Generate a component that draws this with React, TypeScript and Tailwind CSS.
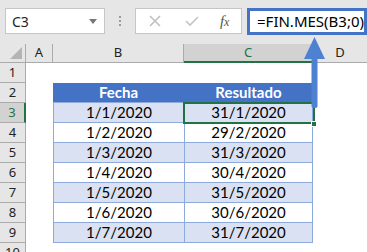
import React from "react";

const rows: [string, string][] = [
  ["1/1/2020", "31/1/2020"],
  ["1/2/2020", "29/2/2020"],
  ["1/3/2020", "31/3/2020"],
  ["1/4/2020", "30/4/2020"],
  ["1/5/2020", "31/5/2020"],
  ["1/6/2020", "30/6/2020"],
  ["1/7/2020", "31/7/2020"],
];

const cellFont = { fontFamily: "Lato, 'Noto Sans', sans-serif" };
const uiFont = { fontFamily: "'Noto Sans', 'Open Sans', sans-serif" };

function RowHead({ n, active }: { n: number; active?: boolean }) {
  return (
    <div
      className={`flex items-center justify-center border-b border-r text-[13px] ${
        active
          ? "bg-[#d2d2d2] text-[#217346] border-b-[#ababab] border-r-2 border-r-[#217346]"
          : "bg-[#e6e6e6] text-[#222] border-[#ababab]"
      }`}
      style={uiFont}
    >
      {n}
    </div>
  );
}

function ColHead({ label, active }: { label: string; active?: boolean }) {
  return (
    <div
      className={`flex items-center justify-center border-r text-[13px] ${
        active
          ? "bg-[#d2d2d2] text-[#217346] border-r-[#ababab] border-b-2 border-b-[#217346]"
          : "bg-[#e6e6e6] text-[#222] border-[#ababab] border-b"
      }`}
      style={uiFont}
    >
      {label}
    </div>
  );
}

export default function App() {
  return (
    <div className="relative w-[367px] h-[252px] overflow-hidden bg-white">
      {/* toolbar */}
      <div className="h-[44px] bg-[#e6e6e6] flex items-start pt-[8px] pl-[5px]">
        <div
          className="w-[102px] h-[26px] bg-white border border-[#c6c6c6] flex items-center justify-between pl-[6px] pr-[7px] text-[14px] text-[#222]"
          style={uiFont}
        >
          <span>C3</span>
          <svg width="8" height="5" viewBox="0 0 8 5">
            <path d="M0 0h8L4 5z" fill="#777" />
          </svg>
        </div>
        <div className="w-[31px] h-[26px] flex flex-col items-center justify-center gap-[2px]">
          <span className="w-[2px] h-[2px] bg-[#9a9a9a]" />
          <span className="w-[2px] h-[2px] bg-[#9a9a9a]" />
          <span className="w-[2px] h-[2px] bg-[#9a9a9a]" />
        </div>
        <div className="w-[110px] h-[26px] bg-white border border-[#c6c6c6] flex items-center">
          <svg width="14" height="14" viewBox="0 0 14 14" className="ml-[12px]">
            <path d="M2 2l10 10M12 2L2 12" stroke="#bdbdbd" strokeWidth="1.5" />
          </svg>
          <svg width="16" height="14" viewBox="0 0 16 14" className="ml-[22px]">
            <path d="M2 7l4 4 8-8" stroke="#c4c4c4" strokeWidth="1.6" fill="none" />
          </svg>
          <span
            className="ml-[20px] italic text-[15px] text-[#555]"
            style={{ fontFamily: "'Liberation Serif', serif" }}
          >
            f<span className="text-[12px]">x</span>
          </span>
        </div>
        <div
          className="ml-[5px] flex-1 h-[27px] border-[3px] border-[#4472c4] bg-white flex items-center pl-[7px] text-[15px] text-black"
          style={uiFont}
        >
          =FIN.MES(B3;0)
        </div>
      </div>

      {/* sheet grid */}
      <div className="grid grid-cols-[26px_27px_131px_129px_1fr] grid-rows-[19px_repeat(10,20px)]">
        <div className="bg-[#e6e6e6] border-r border-b border-[#ababab] relative">
          <svg width="12" height="12" viewBox="0 0 12 12" className="absolute right-[3px] bottom-[3px]">
            <path d="M12 0v12H0z" fill="#b4b4b4" />
          </svg>
        </div>
        <ColHead label="A" />
        <ColHead label="B" />
        <ColHead label="C" active />
        <div className="bg-[#e6e6e6] border-b border-[#ababab] flex items-center justify-center text-[13px] text-[#222]" style={uiFont}>
          D
        </div>

        {/* row 1 */}
        <RowHead n={1} />
        <div />
        <div />
        <div />
        <div />

        {/* row 2: table header */}
        <RowHead n={2} />
        <div />
        <div
          className="bg-[#4472c4] text-white font-bold text-[15px] flex items-center justify-center border-b border-[#8ea9db]"
          style={cellFont}
        >
          Fecha
        </div>
        <div
          className="bg-[#4472c4] text-white font-bold text-[15px] flex items-center justify-center border-b border-[#8ea9db]"
          style={cellFont}
        >
          Resultado
        </div>
        <div />

        {rows.map(([a, b], i) => {
          const band = i % 2 === 0 ? "bg-[#d9e1f2]" : "bg-white";
          return (
            <React.Fragment key={a}>
              <RowHead n={i + 3} active={i === 0} />
              <div />
              <div
                className={`${band} border-l border-b border-[#8ea9db] flex items-center justify-center text-[15px] text-black`}
                style={cellFont}
              >
                {a}
              </div>
              <div
                className={`${band} border-l border-r border-b border-[#8ea9db] flex items-center justify-center text-[15px] text-black`}
                style={cellFont}
              >
                {b}
              </div>
              <div />
            </React.Fragment>
          );
        })}

        <RowHead n={10} />
        <div />
        <div />
        <div />
        <div />
      </div>

      {/* active cell outline with fill handle */}
      <div className="absolute left-[183px] top-[102px] w-[132px] h-[22px] border-2 border-[#217346]" />
      <div className="absolute left-[311px] top-[121px] w-[6px] h-[6px] bg-[#217346] border border-white" />

      {/* pointer arrow from cell up to the formula */}
      <svg className="absolute left-[302px] top-[37px]" width="25" height="72" viewBox="0 0 25 72">
        <path d="M12.5 0L23 22H2z" fill="#4f81d2" />
        <rect x="9.5" y="20" width="6" height="51" rx="2" fill="#4f81d2" />
      </svg>
    </div>
  );
}
